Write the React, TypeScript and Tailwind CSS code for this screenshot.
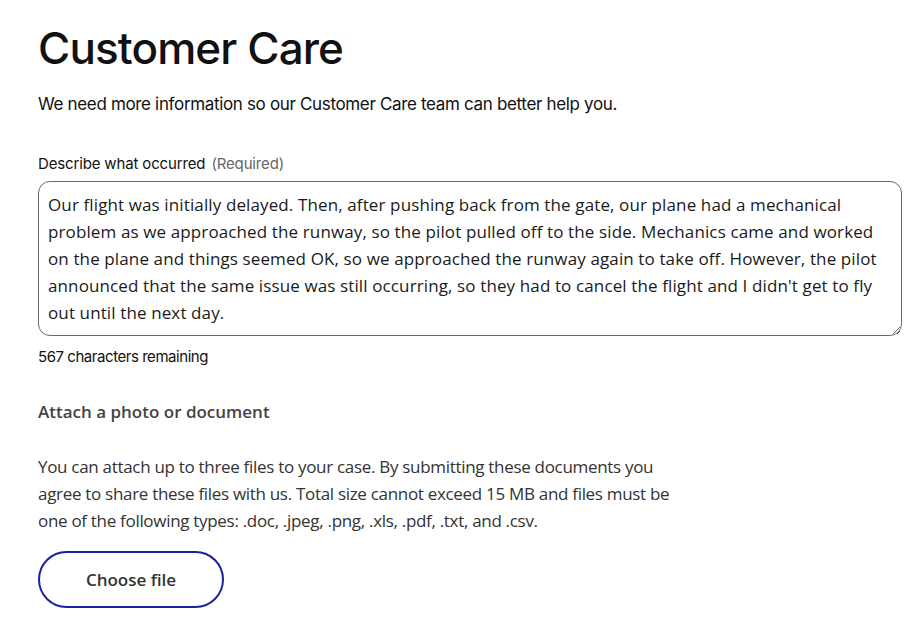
import React from "react";

const story =
  "Our flight was initially delayed. Then, after pushing back from the gate, our plane had a mechanical problem as we approached the runway, so the pilot pulled off to the side. Mechanics came and worked on the plane and things seemed OK, so we approached the runway again to take off. However, the pilot announced that the same issue was still occurring, so they had to cancel the flight and I didn't get to fly out until the next day.";

export default function App() {
  return (
    <div
      className="min-h-[633px] bg-white pl-[38px] pr-[12px] pt-[22px] text-black"
      style={{ fontFamily: "Inter, 'Noto Sans', sans-serif" }}
    >
      <h1 className="text-[44px] leading-[52px] font-medium tracking-[-0.02em] text-[#111]">
        Customer Care
      </h1>
      <p className="mt-[18px] text-[17px] leading-[24px] tracking-[-0.02em] text-[#111]">
        We need more information so our Customer Care team can better help you.
      </p>

      <label className="mt-[38px] block text-[15px] leading-[20px] tracking-[-0.01em] text-[#111]">
        Describe what occurred <span className="ml-[2px] text-[#666]">(Required)</span>
      </label>
      <textarea
        defaultValue={story}
        className="mt-[7px] block h-[155px] w-[864px] rounded-[12px] border border-[#6b6b6b] px-[9px] pt-[9px] pb-[9px] text-[17px] font-medium leading-[27px] tracking-[0.007em] text-[#1a1a1a] outline-none"
        style={{ fontFamily: "'Open Sans', Inter, sans-serif" }}
      />
      <p className="mt-[10px] text-[15px] leading-[22px] tracking-[-0.03em] text-[#111]">
        567 characters remaining
      </p>

      <h2
        className="mt-[32px] text-[17px] leading-[24px] font-semibold text-[#444]"
        style={{ fontFamily: "'Open Sans', Inter, sans-serif" }}
      >
        Attach a photo or document
      </h2>
      <p
        className="mt-[29px] w-[640px] text-[17px] leading-[27px] tracking-[-0.018em] text-[#333]"
        style={{ fontFamily: "'Open Sans', Inter, sans-serif" }}
      >
        You can attach up to three files to your case. By submitting these documents you agree to share
        these files with us. Total size cannot exceed 15 MB and files must be one of the following types:
        .doc, .jpeg, .png, .xls, .pdf, .txt, and .csv.
      </p>
      <button
        className="mt-[17px] flex h-[57px] w-[186px] items-center justify-center rounded-full border-2 border-[#1f1fa3] text-[17px] font-semibold text-[#333]"
        style={{ fontFamily: "'Open Sans', Inter, sans-serif" }}
      >
        Choose file
      </button>
    </div>
  );
}
